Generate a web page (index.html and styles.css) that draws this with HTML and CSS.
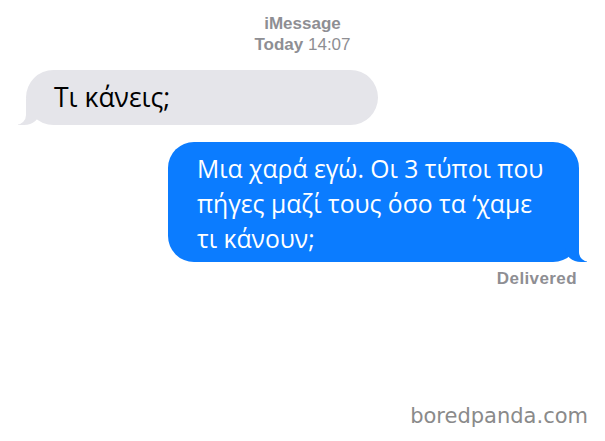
FILE: index.html
```html
<!DOCTYPE html>
<html lang="el">
<head>
<meta charset="utf-8">
<title>iMessage</title>
<link rel="stylesheet" href="styles.css">
</head>
<body>
<div class="page">
  <header class="meta">
    <div class="service">iMessage</div>
    <div class="time"><b>Today</b> 14:07</div>
  </header>
  <div class="row row-in">
    <div class="bubble in">Τι κάνεις;</div>
  </div>
  <div class="row row-out">
    <div class="bubble out">Μια χαρά εγώ. Οι 3 τύποι που<br>πήγες μαζί τους όσο τα ‘χαμε<br>τι κάνουν;</div>
  </div>
  <div class="status">Delivered</div>
  <div class="spacer"></div>
  <footer class="brand">boredpanda.com</footer>
</div>
</body>
</html>
```
FILE: styles.css
```css
html, body {
  margin: 0;
  padding: 0;
  background: #ffffff;
}
.page {
  width: 605px;
  height: 441px;
  display: flex;
  flex-direction: column;
  font-family: "Open Sans", "Noto Sans", sans-serif;
}
.meta {
  padding-top: 14px;
  text-align: center;
  color: #8e8e93;
  font-family: "Liberation Sans", Arial, sans-serif;
  font-size: 17px;
  line-height: 20.5px;
}
.service { font-weight: bold; }
.time b { font-weight: bold; }
.row {
  display: flex;
}
.row-in {
  margin-top: 15px;
  padding-left: 26px;
}
.row-out {
  margin-top: 17px;
  justify-content: flex-end;
  padding-right: 26px;
}
.bubble {
  position: relative;
}
.in {
  width: 352px;
  box-sizing: border-box;
  height: 55px;
  line-height: 55px;
  padding-left: 28px;
  font-size: 26.5px;
  background: #e5e5ea;
  color: #000;
  border-radius: 28px;
}
.out {
  width: 411px;
  box-sizing: border-box;
  height: 120px;
  padding: 9px 10px 6px 29px;
  line-height: 35px;
  font-size: 24.7px;
  background: #0b7cff;
  color: #fff;
  border-radius: 26px;
}
.in::before {
  content: "";
  position: absolute;
  left: -8px;
  bottom: 0;
  width: 22px;
  height: 26px;
  background: #e5e5ea;
  border-bottom-right-radius: 16px 14px;
}
.in::after {
  content: "";
  position: absolute;
  left: -12px;
  bottom: 0;
  width: 12px;
  height: 26px;
  background: #fff;
  border-bottom-right-radius: 10px;
}
.out::before {
  content: "";
  position: absolute;
  right: -8px;
  bottom: 0;
  width: 22px;
  height: 26px;
  background: #0b7cff;
  border-bottom-left-radius: 16px 14px;
}
.out::after {
  content: "";
  position: absolute;
  right: -12px;
  bottom: 0;
  width: 12px;
  height: 26px;
  background: #fff;
  border-bottom-left-radius: 10px;
}
.status {
  margin-top: 8px;
  padding-right: 28px;
  text-align: right;
  color: #8e8e93;
  font-family: "Liberation Sans", Arial, sans-serif;
  font-weight: bold;
  font-size: 17px;
  letter-spacing: 0.4px;
  line-height: 18px;
}
.spacer { flex: 1; }
.brand {
  padding: 0 17px 12px 0;
  text-align: right;
  color: #8a8a8a;
  font-family: "DejaVu Sans", Verdana, sans-serif;
  font-size: 21px;
  line-height: 26px;
}
```
